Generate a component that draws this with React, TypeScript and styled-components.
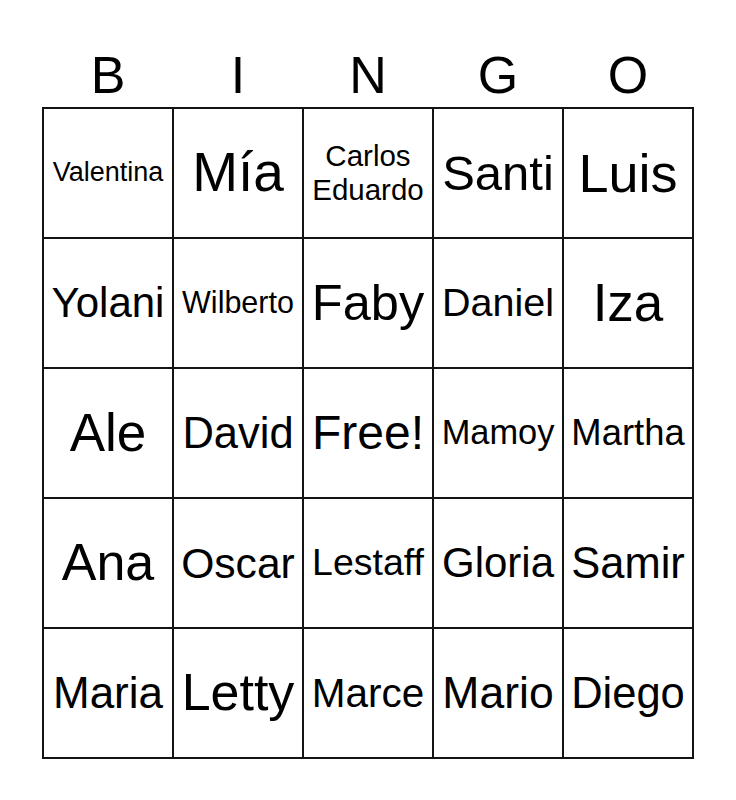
import React from "react";
import styled, { createGlobalStyle } from "styled-components";

const GlobalStyle = createGlobalStyle`
  html, body {
    margin: 0;
    padding: 0;
    background: #fff;
  }
  body {
    font-family: "Liberation Sans", Arial, sans-serif;
    color: #000;
  }
`;

const Page = styled.div`
  width: 736px;
  height: 800px;
  display: flex;
  flex-direction: column;
  align-items: center;
  padding-top: 46px;
  box-sizing: border-box;
`;

const Header = styled.div`
  display: grid;
  grid-template-columns: repeat(5, 130px);
  width: 650px;
  height: 58px;
  margin-bottom: 3px;
`;

const Letter = styled.div`
  font-size: 52px;
  line-height: 58px;
  text-align: center;
`;

const Board = styled.div`
  display: grid;
  grid-template-columns: repeat(5, 128px);
  grid-auto-rows: 128px;
  gap: 2px;
  padding: 2px;
  background: #141414;
`;

const Cell = styled.div<{ $size: number; $lh?: number }>`
  background: #fff;
  display: flex;
  align-items: center;
  justify-content: center;
  text-align: center;
  white-space: nowrap;
  font-size: ${(p) => p.$size}px;
  line-height: ${(p) => (p.$lh ? `${p.$lh}px` : "1.15")};
`;

type Square = { text: string; size: number; lh?: number };

const squares: Square[] = [
  { text: "Valentina", size: 27 },
  { text: "Mía", size: 55 },
  { text: "Carlos\nEduardo", size: 29.5, lh: 34 },
  { text: "Santi", size: 49 },
  { text: "Luis", size: 54 },

  { text: "Yolani", size: 42 },
  { text: "Wilberto", size: 30.5 },
  { text: "Faby", size: 50.5 },
  { text: "Daniel", size: 39.5 },
  { text: "Iza", size: 53 },

  { text: "Ale", size: 53 },
  { text: "David", size: 43.5 },
  { text: "Free!", size: 48 },
  { text: "Mamoy", size: 34.4 },
  { text: "Martha", size: 36.4 },

  { text: "Ana", size: 52 },
  { text: "Oscar", size: 42.6 },
  { text: "Lestaff", size: 37.5 },
  { text: "Gloria", size: 42 },
  { text: "Samir", size: 43.5 },

  { text: "Maria", size: 44 },
  { text: "Letty", size: 52 },
  { text: "Marce", size: 40.5 },
  { text: "Mario", size: 44.5 },
  { text: "Diego", size: 43.5 },
];

export default function App() {
  return (
    <>
      <GlobalStyle />
      <Page>
        <Header>
          {"BINGO".split("").map((l) => (
            <Letter key={l}>{l}</Letter>
          ))}
        </Header>
        <Board>
          {squares.map((s, i) => (
            <Cell key={i} $size={s.size} $lh={s.lh}>
              <span>
                {s.text.split("\n").map((line, j) => (
                  <React.Fragment key={j}>
                    {j > 0 && <br />}
                    {line}
                  </React.Fragment>
                ))}
              </span>
            </Cell>
          ))}
        </Board>
      </Page>
    </>
  );
}
